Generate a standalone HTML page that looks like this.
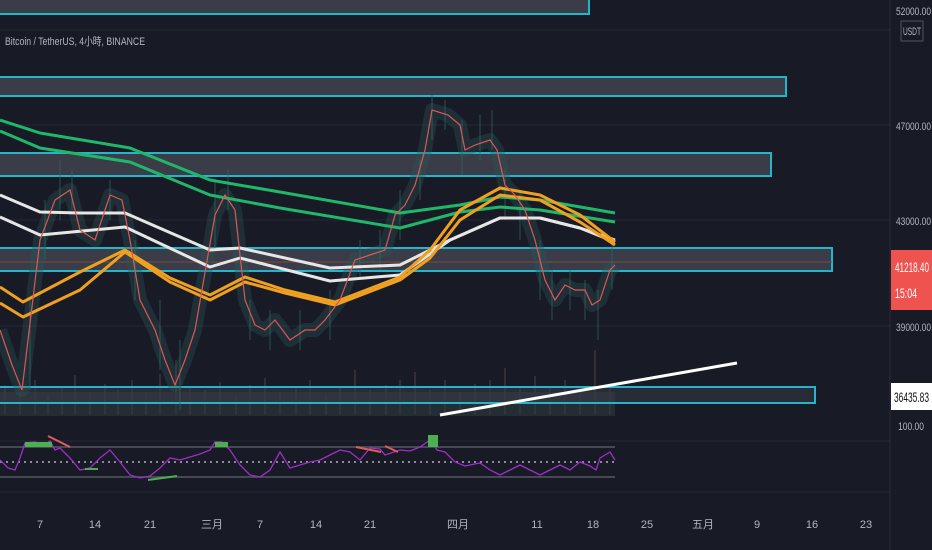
<!DOCTYPE html>
<html><head><meta charset="utf-8"><style>
html,body{margin:0;padding:0;background:#181a25;width:932px;height:550px;overflow:hidden;font-family:"Liberation Sans","Noto Sans CJK SC",sans-serif}
svg{position:absolute;left:0;top:0}
.t{font-family:"Liberation Sans","Noto Sans CJK SC",sans-serif;fill:#b2b5be;font-size:11px}
</style></head><body>
<svg width="932" height="550" viewBox="0 0 932 550">
<rect width="932" height="550" fill="#181a25"/>
<g stroke="#262a36" stroke-width="1">
<line x1="0" y1="125" x2="890" y2="125"/><line x1="0" y1="220" x2="890" y2="220"/><line x1="0" y1="326" x2="890" y2="326"/>
<line x1="0" y1="30" x2="890" y2="30"/>
<line x1="0" y1="441" x2="890" y2="441"/><line x1="0" y1="492" x2="890" y2="492"/>
</g>
<g stroke="#3a2f38" stroke-width="2" opacity="0.9">
<path d="M5 415V385M20 415V392M35 415V380M48 415V395M62 415V388M75 415V375M90 415V393M105 415V384M118 415V390M132 415V380M146 415V392M160 415V374M176 415V360M190 415V387M205 415V390M220 415V382M236 415V395M250 415V385M265 415V378M280 415V392M296 415V388M310 415V380M326 415V395M340 415V386M355 415V370M370 415V390M386 415V385M400 415V380M415 415V372M430 415V390M445 415V380M460 415V392M475 415V384M490 415V380M505 415V368M520 415V388M535 415V376M550 415V388M565 415V380M580 415V390M595 415V350M610 415V385"/>
</g>
<rect x="0" y="392" width="615" height="24" fill="#2e3a3f" opacity="0.6"/>
<g fill="#3a3c47" stroke="#22b5cc" stroke-width="2">
<rect x="-2" y="-5" width="591" height="19"/>
<rect x="-2" y="77" width="788" height="19"/>
<rect x="-2" y="153" width="773" height="23"/>
<rect x="-2" y="248" width="834" height="23"/>
<rect x="-2" y="387" width="817" height="16" fill-opacity="0.5"/>
</g>
<line x1="0" y1="262" x2="832" y2="262" stroke="#7a4a4a" stroke-width="1"/>
<polyline fill="none" stroke="#2c5a58" stroke-width="14" stroke-opacity="0.35" stroke-linejoin="round" points="0,330 12,365 22,390 28,340 40,240 55,200 70,190 80,230 95,240 110,195 122,200 130,240 140,300 155,330 165,360 175,385 185,360 195,330 215,215 225,195 235,210 245,300 255,325 265,330 275,320 290,340 305,330 315,330 325,320 340,300 355,260 370,255 385,250 395,215 405,205 415,185 425,150 432,110 448,115 460,125 465,150 475,145 490,140 497,150 505,185 515,195 525,210 535,240 545,280 555,300 565,285 575,290 585,290 592,305 600,300 610,270 615,265"/>
<g stroke="#2f6a66" stroke-width="1" opacity="0.7">
<path d="M30 390V300M45 260V200M60 220V160M72 210V170M110 220V180M135 300V240M160 370V300M180 410V340M215 250V180M228 210V170M250 340V300M270 350V310M300 350V310M330 340V290M360 280V240M380 270V230M400 240V190M420 200V160M432 140V95M445 130V100M462 175V120M480 160V115M492 150V110M505 220V170M520 240V190M540 300V240M552 320V270M570 310V270M585 320V280M598 340V290M612 290V240"/>
</g>
<g fill="none" stroke-width="3" stroke-linejoin="round">
<polyline stroke="#1fb86a" points="0,120 40,133 130,148 210,180 280,192 400,213 460,205 500,197 540,200 615,213"/>
<polyline stroke="#1fb86a" points="0,131 40,148 130,162 210,195 280,208 400,228 460,212 500,207 540,210 615,222"/>
<polyline stroke="#e6e6e6" points="0,195 40,212 80,213 125,213 210,250 240,248 330,268 400,265 450,240 500,218 540,218 580,228 615,240"/>
<polyline stroke="#e6e6e6" points="0,217 40,235 125,227 210,267 240,258 330,281 400,275 450,240 500,218 540,218 580,228 615,242"/>
<polyline stroke="#f0a020" points="0,287 23,302 80,272 125,250 170,278 210,295 245,277 285,290 335,302 400,277 430,250 460,210 500,188 540,195 580,215 615,242"/>
<polyline stroke="#f0a020" points="0,303 23,317 80,290 125,252 170,282 210,300 245,282 285,293 335,305 400,280 430,258 460,220 500,195 540,200 580,222 615,245"/>
</g>
<polyline fill="none" stroke="#e05555" stroke-width="1.2" points="0,330 12,365 22,390 28,340 40,240 55,200 70,190 80,230 95,240 110,195 122,200 130,240 140,300 155,330 165,360 175,385 185,360 195,330 215,215 225,195 235,210 245,300 255,325 265,330 275,320 290,340 305,330 315,330 325,320 340,300 355,260 370,255 385,250 395,215 405,205 415,185 425,150 432,110 448,115 460,125 465,150 475,145 490,140 497,150 505,185 515,195 525,210 535,240 545,280 555,300 565,285 575,290 585,290 592,305 600,300 610,270 615,265"/>
<line x1="440" y1="415" x2="737" y2="363" stroke="#fff" stroke-width="3"/>
<g stroke="#555866" stroke-width="1.5"><line x1="0" y1="447" x2="615" y2="447"/><line x1="0" y1="477" x2="615" y2="477"/></g>
<line x1="0" y1="462" x2="615" y2="462" stroke="#b9a9c9" stroke-width="1.5" stroke-dasharray="2,4"/>
<polyline fill="none" stroke="#9c30c6" stroke-width="1.3" points="0,460 8,468 15,470 20,458 25,443 35,442 45,445 50,441 55,450 60,448 70,458 80,470 90,468 100,458 110,450 120,462 130,475 140,478 150,476 160,468 170,458 180,460 190,457 200,454 210,450 215,442 222,442 230,450 240,465 250,475 260,477 270,470 280,452 290,468 300,465 310,462 320,460 330,455 340,450 350,452 360,460 370,448 380,449 385,455 400,450 410,451 420,447 430,440 437,450 445,452 455,462 465,466 480,463 490,470 500,475 510,470 520,465 530,470 540,475 550,470 560,465 570,470 580,462 590,466 596,470 600,458 610,452 615,460"/>
<g stroke-width="2"><line x1="48" y1="436" x2="70" y2="447" stroke="#e55b5b"/><line x1="356" y1="447" x2="381" y2="452" stroke="#e55b5b"/><line x1="385" y1="446" x2="398" y2="452" stroke="#e55b5b"/><line x1="148" y1="480" x2="177" y2="476" stroke="#4caf50"/><line x1="85" y1="469" x2="98" y2="469" stroke="#4caf50"/></g>
<g fill="#4caf50"><rect x="25" y="442" width="27" height="5"/><rect x="215" y="442" width="13" height="5"/><rect x="428" y="435" width="10" height="12"/></g>
<line x1="890" y1="0" x2="890" y2="550" stroke="#2a2e39"/>
<text class="t" x="5" y="45" font-size="13" textLength="140" lengthAdjust="spacingAndGlyphs">Bitcoin / TetherUS, 4小時, BINANCE</text>
<g class="t" font-size="13.5">
<text x="896" y="15" textLength="35" lengthAdjust="spacingAndGlyphs">52000.00</text>
<text x="896" y="130" textLength="35" lengthAdjust="spacingAndGlyphs">47000.00</text>
<text x="896" y="225" textLength="35" lengthAdjust="spacingAndGlyphs">43000.00</text>
<text x="896" y="331" textLength="35" lengthAdjust="spacingAndGlyphs">39000.00</text>
<text x="898" y="430" textLength="26" lengthAdjust="spacingAndGlyphs">100.00</text>
</g>
<rect x="901" y="21" width="22" height="20" fill="none" stroke="#555" />
<text class="t" x="903" y="35" font-size="11" textLength="18" lengthAdjust="spacingAndGlyphs">USDT</text>
<rect x="891" y="250" width="41" height="60" fill="#ef5350"/>
<text x="895" y="272" fill="#fff" font-size="14" font-family="Liberation Sans" textLength="34" lengthAdjust="spacingAndGlyphs">41218.40</text>
<text x="895" y="298" fill="#fff" font-size="14" font-family="Liberation Sans" textLength="22" lengthAdjust="spacingAndGlyphs">15:04</text>
<rect x="891" y="383" width="41" height="27" fill="#fff"/>
<text x="894" y="402" fill="#111" font-size="14" font-family="Liberation Sans" textLength="35" lengthAdjust="spacingAndGlyphs">36435.83</text>
<g class="t" font-size="13" text-anchor="middle">
<text x="40" y="528">7</text><text x="95" y="528">14</text><text x="150" y="528">21</text><text x="212" y="528">三月</text><text x="260" y="528">7</text><text x="316" y="528">14</text><text x="370" y="528">21</text><text x="458" y="528">四月</text><text x="537" y="528">11</text><text x="593" y="528">18</text><text x="647" y="528">25</text><text x="703" y="528">五月</text><text x="757" y="528">9</text><text x="812" y="528">16</text><text x="866" y="528">23</text>
</g>
</svg>
</body></html>
